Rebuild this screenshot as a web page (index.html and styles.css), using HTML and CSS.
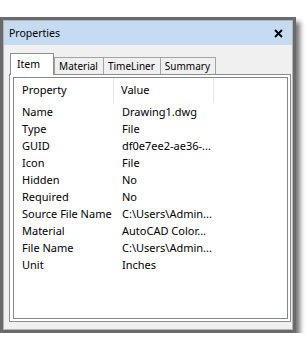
FILE: index.html
```html
<!DOCTYPE html>
<html lang="en">
<head>
    <meta charset="UTF-8">
    <meta name="viewport" content="width=device-width, initial-scale=1.0">
    <title>Properties</title>
    <link rel="stylesheet" href="styles.css">
</head>
<body>

    <div class="window">
        <div class="titlebar">
            <span class="title">Properties</span>
            <svg class="close" width="9" height="9" viewBox="0 0 9 9">
                <path d="M1 1 L8 8 M8 1 L1 8" stroke="#000" stroke-width="1.8" fill="none"/>
            </svg>
        </div>

        <div class="content">
            <div class="tabs">
                <div class="tab active">Item</div>
                <div class="tab">Material</div>
                <div class="tab">TimeLiner</div>
                <div class="tab">Summary</div>
            </div>

            <div class="tab-page">
                <div class="list">
                    <div class="list-head">
                        <div class="col-prop">Property</div>
                        <div class="col-val">Value</div>
                    </div>
                    <!-- linhas da lista de propriedades -->
                    <div class="row"><div class="col-prop">Name</div><div class="col-val">Drawing1.dwg</div></div>
                    <div class="row"><div class="col-prop">Type</div><div class="col-val">File</div></div>
                    <div class="row"><div class="col-prop">GUID</div><div class="col-val">df0e7ee2-ae36-...</div></div>
                    <div class="row"><div class="col-prop">Icon</div><div class="col-val">File</div></div>
                    <div class="row"><div class="col-prop">Hidden</div><div class="col-val">No</div></div>
                    <div class="row"><div class="col-prop">Required</div><div class="col-val">No</div></div>
                    <div class="row"><div class="col-prop">Source File Name</div><div class="col-val">C:\Users\Admin...</div></div>
                    <div class="row"><div class="col-prop">Material</div><div class="col-val">AutoCAD Color...</div></div>
                    <div class="row"><div class="col-prop">File Name</div><div class="col-val">C:\Users\Admin...</div></div>
                    <div class="row"><div class="col-prop">Unit</div><div class="col-val">Inches</div></div>
                </div>
            </div>
        </div>
    </div>

</body>
</html>
```

FILE: styles.css
```css
body {
    margin: 0;
    padding: 0;
    background: #fff;
    font-family: 'Noto Sans', sans-serif;
    font-size: 11px;
    color: #000;
}

.window {
    margin-top: 17px;
    width: 296px;
    height: 316px;
    box-sizing: border-box;
    border: 3px solid #6a6a6a;
    background: #f0f0f0;
    box-shadow: inset 0 0 0 1px #b4b4b4, 4px 5px 5px rgba(0, 0, 0, 0.55);
    display: flex;
    flex-direction: column;
}

.titlebar {
    height: 24px;
    margin: 1px 1px 0 1px;
    background: #c5dbf2;
    display: flex;
    justify-content: space-between;
    align-items: center;
    padding: 0 9px 0 5px;
}

.title {
    font-size: 10.5px;
}

.close {
    display: block;
}

.content {
    flex: 1;
    display: flex;
    flex-direction: column;
    padding: 7px 2px 8px 6px;
}

.tabs {
    display: flex;
    align-items: flex-end;
    height: 22px;
    padding-left: 1px;
}

.tab {
    height: 17px;
    box-sizing: border-box;
    border: 1px solid #a3a3a3;
    border-bottom: none;
    background: #f0f0f0;
    font-size: 10px;
    line-height: 16px;
    padding: 0 5px 0 4px;
    margin-left: -1px;
}

.tab.active {
    height: 22px;
    background: #fff;
    border-color: #898c95;
    padding: 0 13px 0 6px;
    margin-bottom: -1px;
    position: relative;
    z-index: 1;
    font-size: 10.5px;
    line-height: 20px;
    margin-left: 0;
    margin-right: 1px;
}

.tab-page {
    flex: 1;
    border: 1px solid #898c95;
    background: #fff;
    padding: 2px 2px 2px 3px;
    display: flex;
}

.list {
    flex: 1;
    border: 1px solid #828790;
    background: #fff;
}

.list-head {
    display: flex;
    height: 25px;
    line-height: 24px;
}

.list-head .col-prop,
.list-head .col-val {
    border-right: 1px solid #e5e5e5;
}

.row {
    display: flex;
    height: 17px;
    line-height: 17px;
}

.col-prop {
    width: 100px;
    padding-left: 8px;
    box-sizing: border-box;
    white-space: nowrap;
}

.col-val {
    width: 100px;
    padding-left: 7px;
    box-sizing: border-box;
    white-space: nowrap;
}

.row .col-prop {
    width: 101px;
}
```
